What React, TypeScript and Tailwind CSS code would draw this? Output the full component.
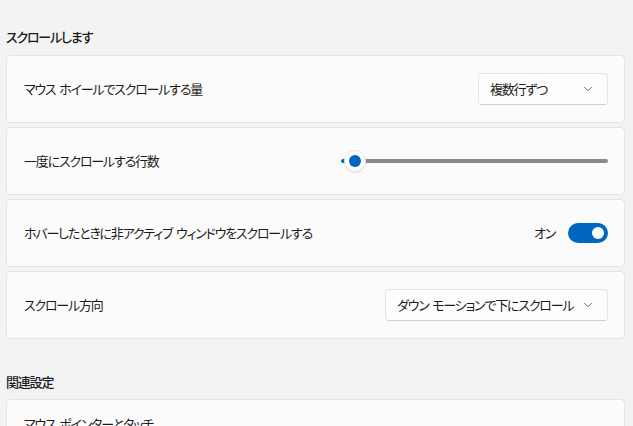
import { ChevronDown } from "lucide-react";

const font = {
  fontFamily: '"Noto Sans CJK JP", "Noto Sans", sans-serif',
};

const txt =
  "text-[13px] leading-[20px] tracking-[-1.2px] [word-spacing:2px] whitespace-nowrap text-[#1b1b1b] [font-feature-settings:'palt']";

function Card({
  label,
  children,
  top,
}: {
  label: string;
  children?: React.ReactNode;
  top?: boolean;
}) {
  return (
    <div
      className={`h-[68px] flex justify-between pl-[17px] pr-[16px] rounded-[4px] border border-[#e5e5e5] bg-[#fbfbfb] ${
        top ? "items-start pt-[14px]" : "items-center"
      }`}
    >
      <span className={txt}>{label}</span>
      {children}
    </div>
  );
}

function Dropdown({ value, width }: { value: string; width: string }) {
  return (
    <div
      className={`${width} h-[32px] flex items-center justify-between pl-[11px] pr-[12px] rounded-[4px] border border-[#e5e5e5] border-b-[#d0d0d0] bg-[#fdfdfd]`}
    >
      <span className={txt}>{value}</span>
      <ChevronDown className="w-[14px] h-[14px] text-[#5f5f5f]" strokeWidth={1.5} />
    </div>
  );
}

function Slider() {
  return (
    <div className="relative w-[267px] h-[22px] flex items-center">
      <div className="absolute left-0 w-[8px] h-[4px] rounded-l-full bg-[#0067c0]" />
      <div className="absolute left-[20px] right-0 h-[4px] rounded-full bg-[#8a8a8a]" />
      <div className="absolute left-[3px] w-[22px] h-[22px] rounded-full bg-white border border-[#e5e5e5] flex items-center justify-center shadow-[0_1px_1px_rgba(0,0,0,0.08)]">
        <div className="w-[12px] h-[12px] rounded-full bg-[#0067c0]" />
      </div>
    </div>
  );
}

function Toggle() {
  return (
    <div className="flex items-center gap-[13px]">
      <span className={txt}>オン</span>
      <div className="w-[40px] h-[20px] rounded-full bg-[#0067c0] flex items-center justify-end pr-[4px]">
        <div className="w-[12px] h-[12px] rounded-full bg-white" />
      </div>
    </div>
  );
}

export default function App() {
  return (
    <div style={font} className="w-[633px] h-[426px] overflow-hidden bg-[#f3f3f3] pl-[6px] pr-[8px]">
      <div className="pt-[27px] h-[55px]">
        <h2 className={`${txt} font-medium`}>スクロールします</h2>
      </div>
      <div className="flex flex-col gap-[4px]">
        <Card label="マウス ホイールでスクロールする量">
          <Dropdown value="複数行ずつ" width="w-[130px]" />
        </Card>
        <Card label="一度にスクロールする行数">
          <Slider />
        </Card>
        <Card label="ホバーしたときに非アクティブ ウィンドウをスクロールする">
          <Toggle />
        </Card>
        <Card label="スクロール方向">
          <Dropdown value="ダウン モーションで下にスクロール" width="w-[223px]" />
        </Card>
      </div>
      <div className="pt-[33px] h-[60px]">
        <h2 className={`${txt} font-medium`}>関連設定</h2>
      </div>
      <Card label="マウス ポインターとタッチ" top />
    </div>
  );
}
